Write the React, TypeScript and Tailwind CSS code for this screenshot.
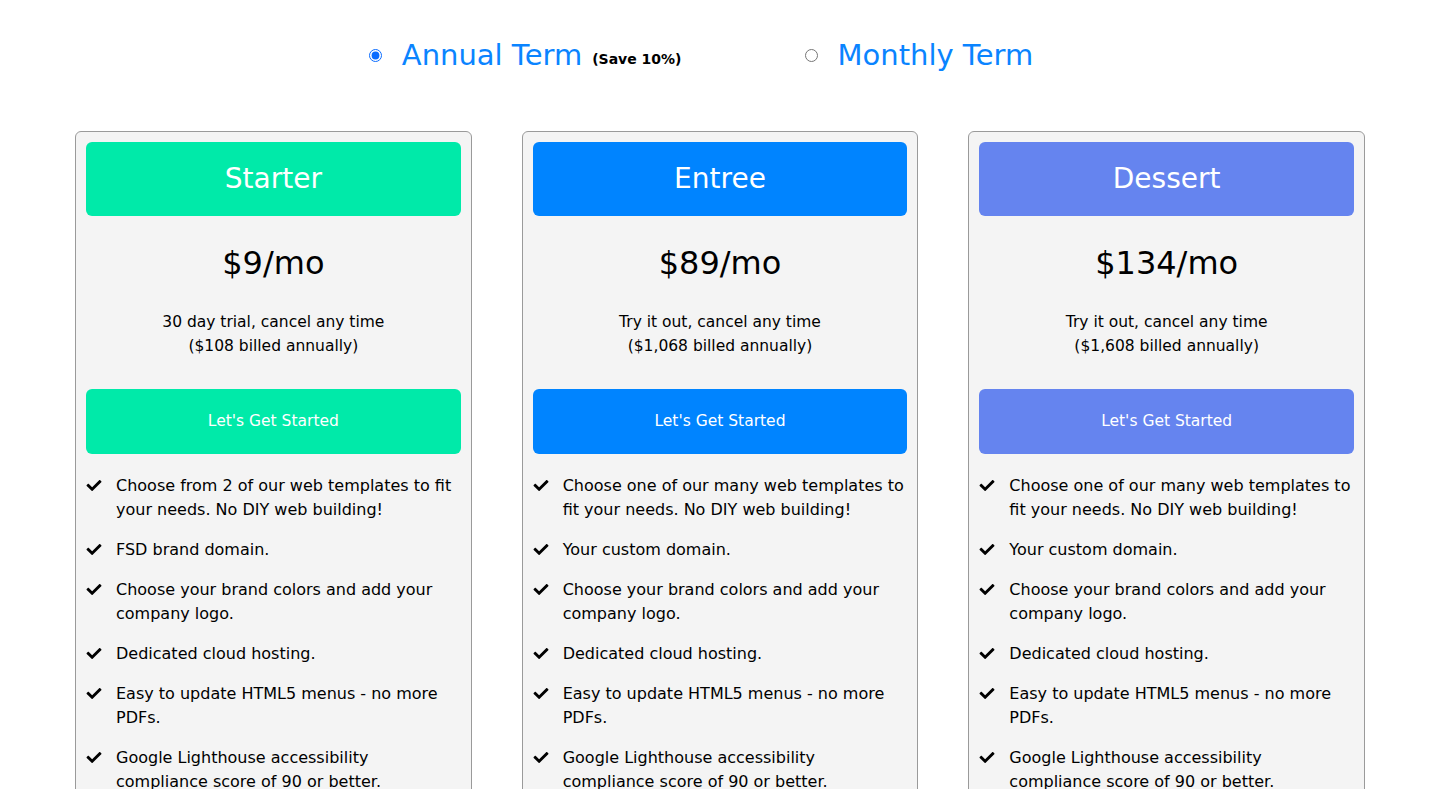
import { FaCheck } from "react-icons/fa";

type Plan = {
    name: string;
    color: string;
    price: string;
    note: string;
    billed: string;
    features: string[];
};

const common = [
    "Choose your brand colors and add your company logo.",
    "Dedicated cloud hosting.",
    "Easy to update HTML5 menus - no more PDFs.",
    "Google Lighthouse accessibility compliance score of 90 or better.",
];

const plans: Plan[] = [
    {
        name: "Starter",
        color: "bg-[#00eaa9]",
        price: "$9/mo",
        note: "30 day trial, cancel any time",
        billed: "($108 billed annually)",
        features: [
            "Choose from 2 of our web templates to fit your needs. No DIY web building!",
            "FSD brand domain.",
            ...common,
        ],
    },
    {
        name: "Entree",
        color: "bg-[#0084ff]",
        price: "$89/mo",
        note: "Try it out, cancel any time",
        billed: "($1,068 billed annually)",
        features: [
            "Choose one of our many web templates to fit your needs. No DIY web building!",
            "Your custom domain.",
            ...common,
        ],
    },
    {
        name: "Dessert",
        color: "bg-[#6584ef]",
        price: "$134/mo",
        note: "Try it out, cancel any time",
        billed: "($1,608 billed annually)",
        features: [
            "Choose one of our many web templates to fit your needs. No DIY web building!",
            "Your custom domain.",
            ...common,
        ],
    },
];

const Card = ({ plan }: { plan: Plan }) => (
    <div className="flex flex-col rounded-[6px] border border-[#9a9a9a] bg-[#f4f4f4] p-[10px]">
        <div
            className={`${plan.color} flex h-[74px] items-center justify-center rounded-[6px] text-[28px] text-white`}
        >
            {plan.name}
        </div>
        <p className="mt-[27px] text-center text-[32px] leading-[40px] text-black">
            {plan.price}
        </p>
        <p className="mt-[27px] text-center text-[15.5px] leading-[24px] text-black">
            {plan.note}
            <br />
            {plan.billed}
        </p>
        <button
            className={`${plan.color} mt-[31px] h-[65px] rounded-[6px] text-[15.5px] text-white`}
        >
            Let's Get Started
        </button>
        <ul className="mt-[20px] flex flex-col gap-[16px]">
            {plan.features.map((f) => (
                <li key={f} className="flex items-start gap-[14px]">
                    <FaCheck className="mt-[4px] h-[15px] w-[16px] shrink-0 text-black" />
                    <span className="text-[16px] leading-[24px] text-black">
                        {f}
                    </span>
                </li>
            ))}
        </ul>
    </div>
);

export default function App() {
    return (
        <div className="h-[789px] overflow-hidden bg-white font-['DejaVu_Sans',sans-serif]">
            <div className="flex justify-center gap-[123px] pr-[38px] pt-[33px]">
                <label className="flex items-center">
                    <input
                        type="radio"
                        name="term"
                        defaultChecked
                        className="h-[13px] w-[13px] accent-[#0a6cff]"
                    />
                    <span className="ml-[20px] text-[29px] leading-[44px] text-[#0a84ff]">
                        Annual Term
                    </span>
                    <span className="ml-[10px] mt-[8px] text-[14px] font-bold text-black">
                        (Save 10%)
                    </span>
                </label>
                <label className="flex items-center">
                    <input
                        type="radio"
                        name="term"
                        className="h-[13px] w-[13px]"
                    />
                    <span className="ml-[20px] text-[29px] leading-[44px] text-[#0a84ff]">
                        Monthly Term
                    </span>
                </label>
            </div>
            <div className="mx-auto mt-[54px] grid w-[1290px] grid-cols-3 gap-[50px]">
                {plans.map((p) => (
                    <Card key={p.name} plan={p} />
                ))}
            </div>
        </div>
    );
}
